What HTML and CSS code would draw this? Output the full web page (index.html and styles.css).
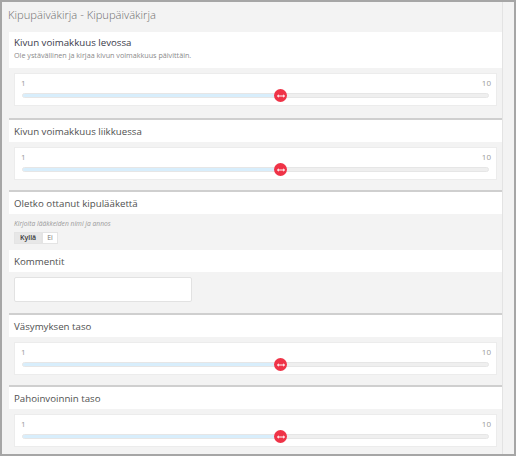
FILE: index.html
```html
<!DOCTYPE html>
<html lang="fi">
<head>
<meta charset="utf-8">
<title>Kipupäiväkirja</title>
<link rel="stylesheet" href="styles.css">
</head>
<body>
<div class="frame">
  <div class="main">
    <h1 class="title">Kipupäiväkirja - Kipupäiväkirja</h1>

    <section class="card">
      <div class="head tall">
        <div class="q first">Kivun voimakkuus levossa</div>
        <div class="sub">Ole ystävällinen ja kirjaa kivun voimakkuus päivittäin.</div>
      </div>
      <div class="body body-first">
        <div class="slider">
          <div class="labels"><span>1</span><span>10</span></div>
          <div class="track"><div class="fill" style="width:55.6%"></div><div class="thumb" style="left:55.6%"><svg viewBox="0 0 8 4" width="8" height="4"><path d="M0.5 2H7.5M0.5 2L2 0.8M0.5 2L2 3.2M7.5 2L6 0.8M7.5 2L6 3.2" stroke="#fff" stroke-width="1" fill="none"/></svg></div></div>
        </div>
      </div>
    </section>

    <section class="card">
      <div class="head"><div class="q">Kivun voimakkuus liikkuessa</div></div>
      <div class="body">
        <div class="slider">
          <div class="labels"><span>1</span><span>10</span></div>
          <div class="track"><div class="fill" style="width:55.6%"></div><div class="thumb" style="left:55.6%"><svg viewBox="0 0 8 4" width="8" height="4"><path d="M0.5 2H7.5M0.5 2L2 0.8M0.5 2L2 3.2M7.5 2L6 0.8M7.5 2L6 3.2" stroke="#fff" stroke-width="1" fill="none"/></svg></div></div>
        </div>
      </div>
    </section>

    <section class="card">
      <div class="head"><div class="q">Oletko ottanut kipulääkettä</div></div>
      <div class="body med">
        <div class="hint">Kirjoita lääkkeiden nimi ja annos</div>
        <div class="btns"><span class="btn on">Kyllä</span><span class="btn">Ei</span></div>
      </div>
      <div class="head"><div class="q">Kommentit</div></div>
      <div class="body comm">
        <div class="textarea"></div>
      </div>
    </section>

    <section class="card">
      <div class="head"><div class="q">Väsymyksen taso</div></div>
      <div class="body">
        <div class="slider">
          <div class="labels"><span>1</span><span>10</span></div>
          <div class="track"><div class="fill" style="width:55.6%"></div><div class="thumb" style="left:55.6%"><svg viewBox="0 0 8 4" width="8" height="4"><path d="M0.5 2H7.5M0.5 2L2 0.8M0.5 2L2 3.2M7.5 2L6 0.8M7.5 2L6 3.2" stroke="#fff" stroke-width="1" fill="none"/></svg></div></div>
        </div>
      </div>
    </section>

    <section class="card last">
      <div class="head"><div class="q">Pahoinvoinnin taso</div></div>
      <div class="body">
        <div class="slider">
          <div class="labels"><span>1</span><span>10</span></div>
          <div class="track"><div class="fill" style="width:55.6%"></div><div class="thumb" style="left:55.6%"><svg viewBox="0 0 8 4" width="8" height="4"><path d="M0.5 2H7.5M0.5 2L2 0.8M0.5 2L2 3.2M7.5 2L6 0.8M7.5 2L6 3.2" stroke="#fff" stroke-width="1" fill="none"/></svg></div></div>
        </div>
      </div>
    </section>
  </div>
  <div class="gutter"></div>
</div>
</body>
</html>
```
FILE: styles.css
```css
html, body {
  margin: 0;
  padding: 0;
}
body {
  font-family: "Open Sans", "Liberation Sans", sans-serif;
  background: #f3f3f3;
}
.frame {
  width: 516px;
  height: 456px;
  box-sizing: border-box;
  border: 2px solid #a6a6a6;
  background: #f3f3f3;
  display: flex;
  overflow: hidden;
}
.main {
  width: 493px;
  padding-left: 7px;
  flex: none;
}
.gutter {
  flex: 1;
  border-left: 1px solid #e3e3e3;
}
.title {
  margin: 0;
  height: 30px;
  font-size: 11.2px;
  font-weight: 300;
  color: #6f6f6f;
  line-height: 25px;
  margin-left: -1px;
}
.card {
  border-bottom: 2px solid #cfcfcf;
}
.card.last {
  border-bottom: none;
}
.head {
  background: #fff;
  height: 22px;
  padding-left: 5px;
  display: flex;
  flex-direction: column;
  justify-content: center;
}
.head.tall {
  height: 36px;
  justify-content: flex-start;
  padding-top: 4px;
  box-sizing: border-box;
}
.q {
  font-size: 9.7px;
  color: #505050;
  line-height: 13px;
}
.q.first {
  color: #3a3a4a;
}
.sub {
  font-size: 7.2px;
  color: #8a8a8a;
  line-height: 12px;
}
.body {
  padding: 5px 5px 10px 5px;
}
.body.body-first {
  padding-bottom: 12px;
}
.slider {
  background: #fff;
  border: 1px solid #ececec;
  height: 31px;
  padding: 0 7px 0 7px;
  position: relative;
}
.labels {
  display: flex;
  justify-content: space-between;
  font-size: 8px;
  color: #9a9a9a;
  line-height: 10px;
  padding-top: 4px;
  margin-left: -1px;
  margin-right: -2px;
}
.track {
  position: relative;
  height: 3px;
  margin-top: 5px;
  background: #efefef;
  border: 1px solid #e6e6e6;
  border-radius: 3px;
}
.fill {
  height: 100%;
  background: #d8eefc;
  border-radius: 3px 0 0 3px;
}
.thumb {
  position: absolute;
  top: 50%;
  width: 13px;
  height: 13px;
  margin: -6.5px 0 0 -7.5px;
  border-radius: 50%;
  background: #ef3347;
  display: flex;
  align-items: center;
  justify-content: center;
}
.thumb svg {
  display: block;
}
.body.med {
  padding: 5px 5px 6px 5px;
}
.hint {
  font-size: 6.7px;
  font-style: italic;
  color: #9a9a9a;
  line-height: 10px;
}
.btns {
  display: flex;
  margin-top: 3px;
}
.btn {
  font-size: 7px;
  line-height: 10px;
  padding: 0 4px;
  background: #fff;
  color: #777;
  border: 1px solid #e4e4e4;
}
.btn.on {
  background: #e7e7e7;
  color: #333;
  font-weight: 600;
  padding: 0 5px;
}
.body.comm {
  padding: 5px 5px 11px 5px;
}
.textarea {
  width: 176px;
  height: 23px;
  background: #fff;
  border: 1px solid #e2e2e2;
  border-radius: 2px;
}
```
